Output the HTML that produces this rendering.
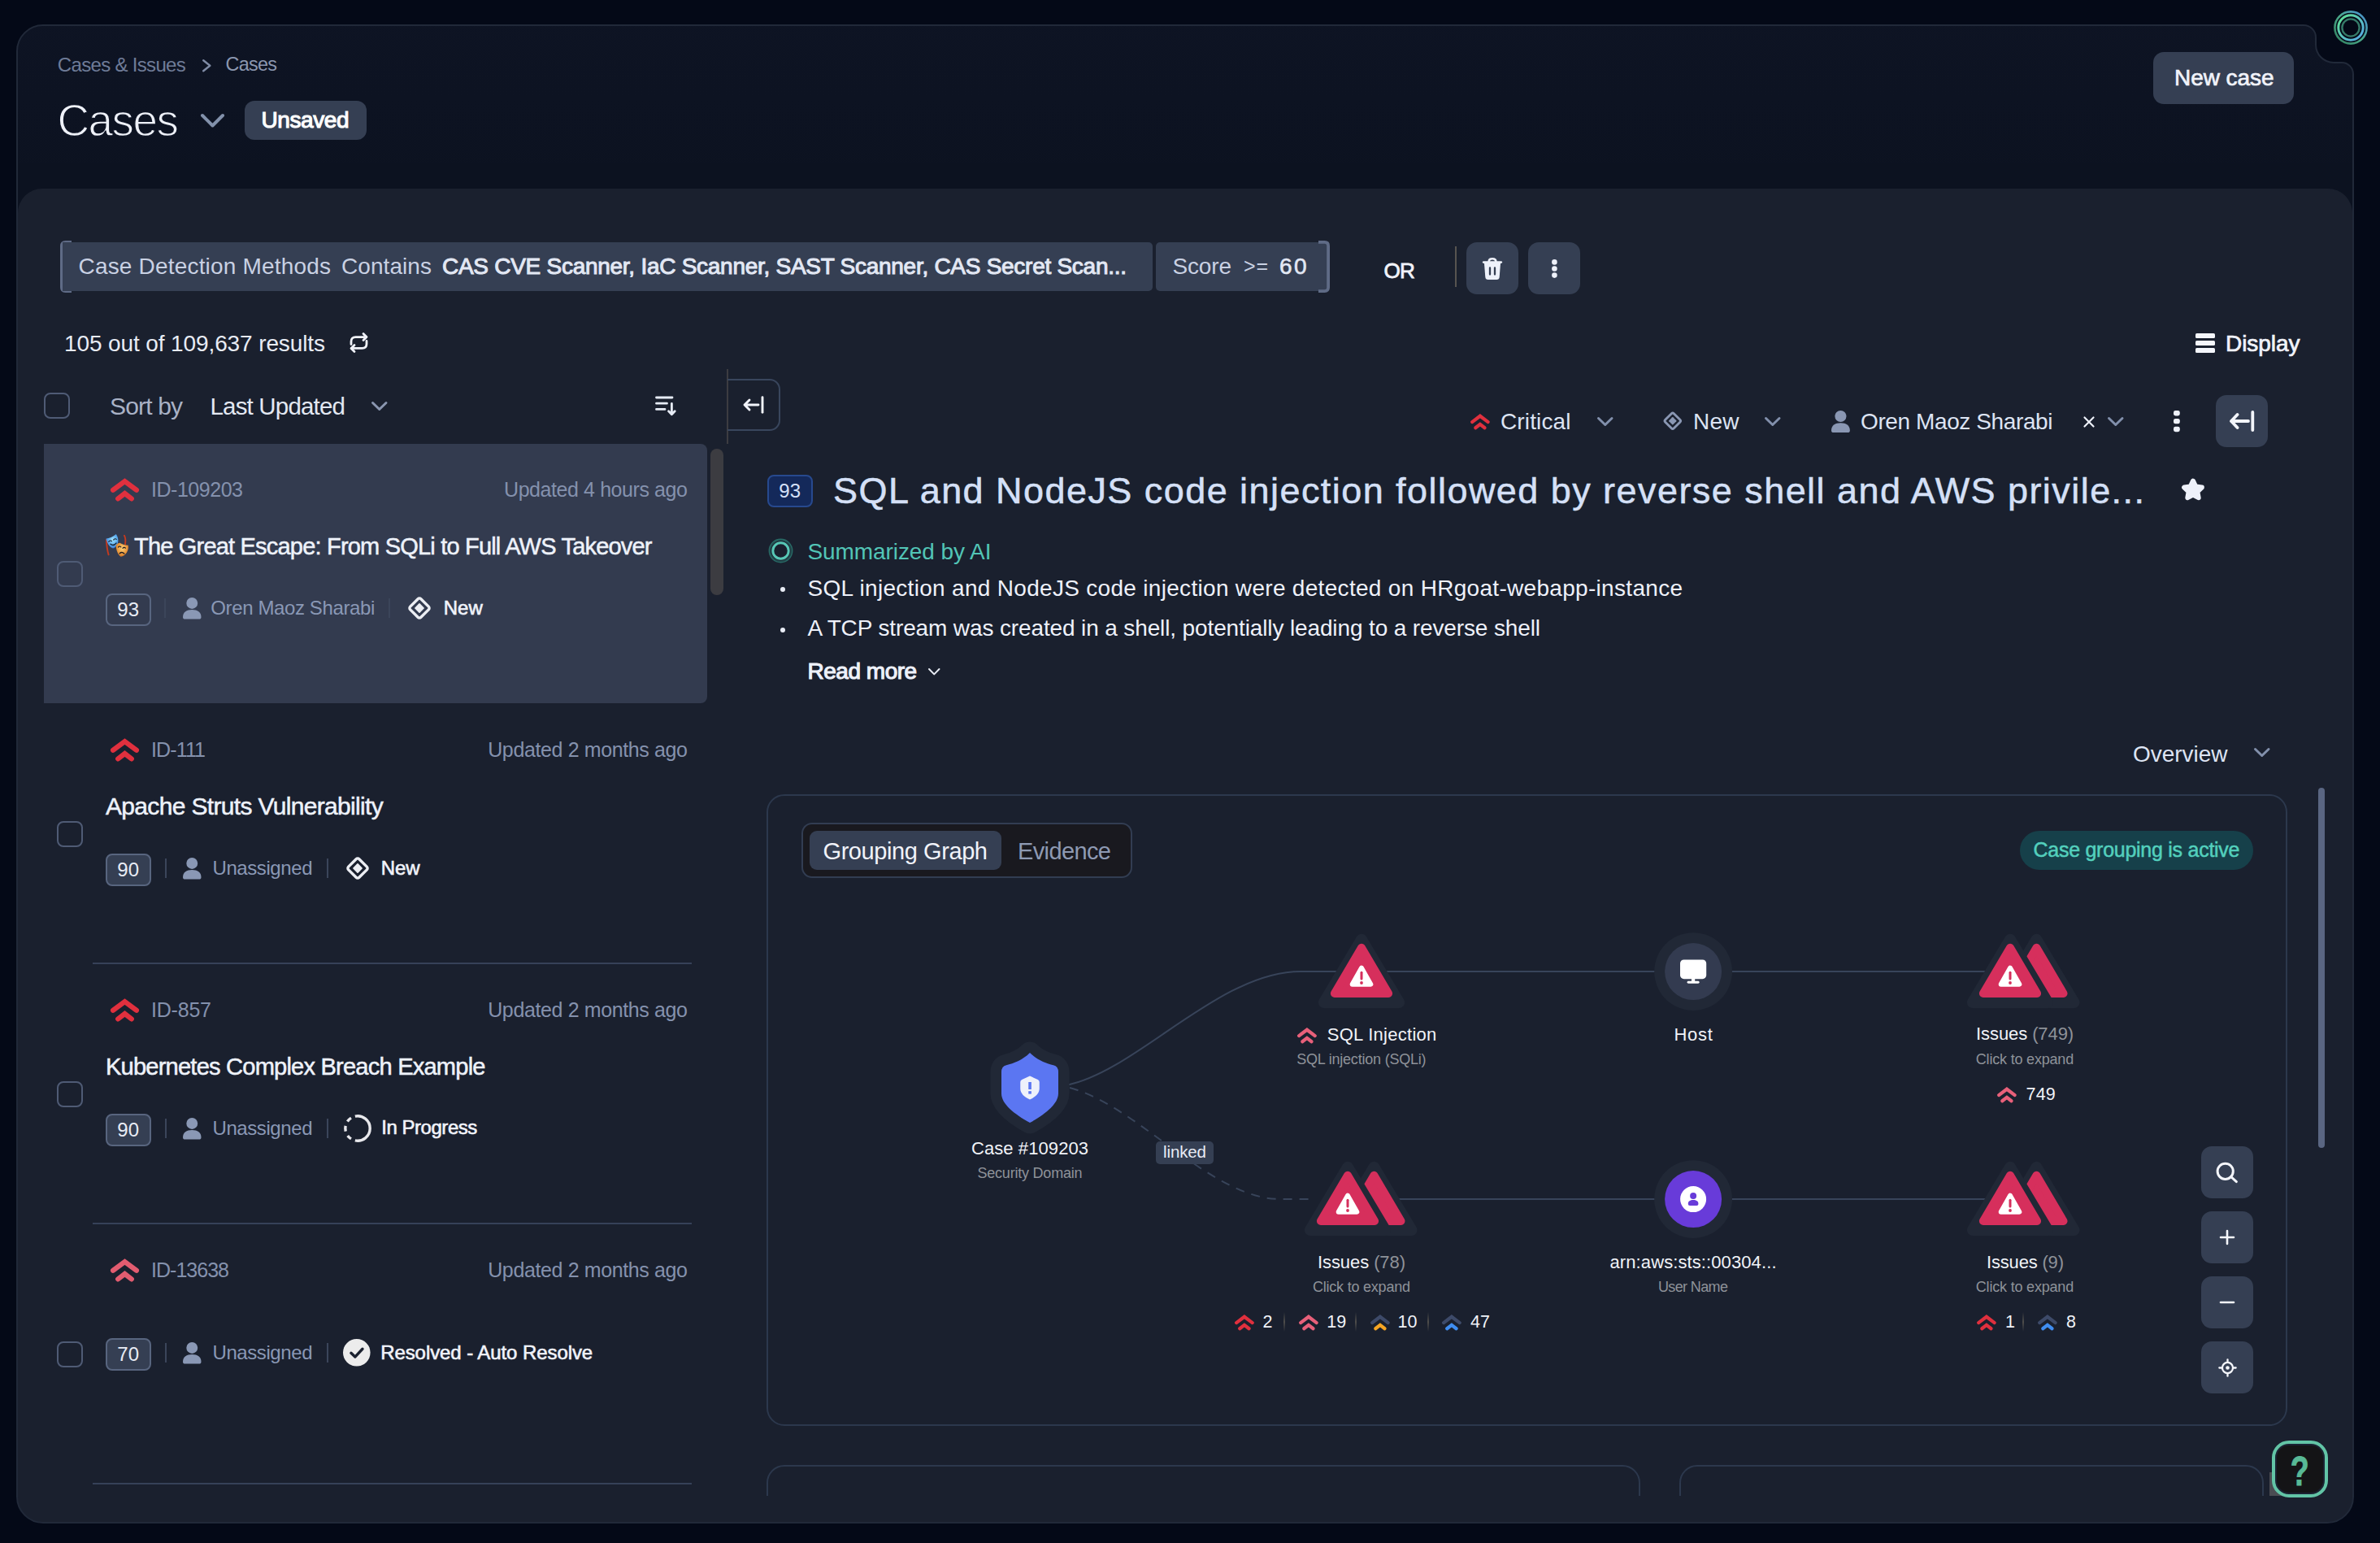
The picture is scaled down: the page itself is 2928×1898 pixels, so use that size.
<!DOCTYPE html>
<html lang="en"><head><meta charset="utf-8"><title>Cases</title>
<style>
html,body{margin:0;padding:0;}
body{width:2928px;height:1898px;overflow:hidden;position:relative;background:#040917;font-family:"Liberation Sans", sans-serif;}
.a{position:absolute;display:block;}
.t{white-space:pre;}
svg{overflow:visible;}
</style></head><body>
<svg class="a" style="left:0px;top:0px;" width="2928" height="1898" viewBox="0 0 2928 1898"><defs><clipPath id="fc"><path d="M21,63 A32,32 0 0 1 53,31 L2834,31 A15,15 0 0 1 2849,46 L2849,55 A22,22 0 0 0 2871,77 L2881,77 A14,14 0 0 1 2895,91 L2895,1841 A32,32 0 0 1 2863,1873 L53,1873 A32,32 0 0 1 21,1841 Z"/></clipPath><linearGradient id="hg" x1="0" y1="0" x2="0" y2="1"><stop offset="0" stop-color="#0e1424"/><stop offset="1" stop-color="#0c1220"/></linearGradient></defs><g clip-path="url(#fc)"><rect x="0" y="0" width="2928" height="240" fill="url(#hg)"/><rect x="0" y="200" width="2928" height="80" fill="#0c1220"/><path d="M22,1898 L22,262 A30,30 0 0 1 52,232 L2864,232 A30,30 0 0 1 2894,262 L2894,1898 Z" fill="#1a202e"/></g><path d="M21,63 A32,32 0 0 1 53,31 L2834,31 A15,15 0 0 1 2849,46 L2849,55 A22,22 0 0 0 2871,77 L2881,77 A14,14 0 0 1 2895,91 L2895,1841 A32,32 0 0 1 2863,1873 L53,1873 A32,32 0 0 1 21,1841 Z" fill="none" stroke="#212939" stroke-width="2"/></svg>
<span class="a t" style="top:67.68px;font-size:24.0px;line-height:24.0px;color:#6f7c98;letter-spacing:-0.672px;left:70.80px;">Cases &amp; Issues</span>
<svg class="a" style="left:248.5px;top:72.5px;" width="10.5" height="15.5" viewBox="0 0 10.5 15.5"><path d="M1.2,1.2 L9.3,7.75 L1.2,14.3" fill="none" stroke="#7f8ba5" stroke-width="2.4" stroke-linecap="round" stroke-linejoin="round"/></svg>
<span class="a t" style="top:68.19px;font-size:23.4px;line-height:23.4px;color:#8b97b0;letter-spacing:-0.703px;left:277.50px;">Cases</span>
<span class="a t" style="top:120.92px;font-size:54.91px;line-height:54.91px;color:#eef1f8;letter-spacing:-1.535px;left:70.50px;-webkit-text-stroke:1.3px #0d1323;">Cases</span>
<svg class="a" style="left:246.5px;top:139.5px;" width="29" height="16.5" viewBox="0 0 29 16.5"><path d="M2.0,2.0 L14.5,14.5 L27.0,2.0" fill="none" stroke="#8291ab" stroke-width="4" stroke-linecap="round" stroke-linejoin="round"/></svg>
<div class="a" style="left:300.5px;top:124px;width:150.5px;height:48px;background:#353f53;border-radius:12px;"></div>
<span class="a t" style="top:134.30px;font-size:28px;line-height:28px;color:#ffffff;letter-spacing:-0.419px;-webkit-text-stroke:1.1px #ffffff;left:321.50px;">Unsaved</span>
<div class="a" style="left:2649px;top:64px;width:173px;height:64px;background:#353f53;border-radius:13px;"></div>
<span class="a t" style="top:82.40px;font-size:28px;line-height:28px;color:#f1f3fa;letter-spacing:-0.048px;-webkit-text-stroke:0.7px #f1f3fa;left:2675.00px;">New case</span>
<svg class="a" style="left:2871.0px;top:12.700000000000003px;" width="42" height="42" viewBox="0 0 42 42"><defs><linearGradient id="lg1" x1="0" y1="1" x2="1" y2="0"><stop offset="0" stop-color="#2f7d5c"/><stop offset="0.5" stop-color="#4aa98a"/><stop offset="1" stop-color="#4a90d9"/></linearGradient><linearGradient id="lg2" x1="0" y1="0" x2="1" y2="1"><stop offset="0" stop-color="#5fe08f"/><stop offset="1" stop-color="#55a6e8"/></linearGradient></defs><circle cx="21" cy="21" r="19.6" fill="none" stroke="url(#lg1)" stroke-width="2.6"/><circle cx="21" cy="21" r="15.2" fill="none" stroke="url(#lg2)" stroke-width="3"/><circle cx="21" cy="21" r="10.6" fill="none" stroke="#357a68" stroke-width="2.4"/></svg>
<svg class="a" style="left:73.8px;top:295.5px;" width="14" height="64" viewBox="0 0 14 64"><path d="M14,1.9 L6.4,1.9 Q1.9,1.9 1.9,6.4 L1.9,57.6 Q1.9,62.1 6.4,62.1 L14,62.1" fill="none" stroke="#5f6b86" stroke-width="3.8"/></svg>
<div class="a" style="left:76.5px;top:298px;width:1341.5px;height:60px;background:#353f53;border-radius:0 5px 5px 0;"></div>
<span class="a t" style="top:313.80px;font-size:28px;line-height:28px;color:#c9d1e3;letter-spacing:0.185px;left:96.50px;">Case Detection Methods</span>
<span class="a t" style="top:313.80px;font-size:28px;line-height:28px;color:#c9d1e3;letter-spacing:0.069px;left:420.00px;">Contains</span>
<span class="a t" style="top:313.80px;font-size:28px;line-height:28px;color:#e3e8f4;letter-spacing:-0.272px;-webkit-text-stroke:1.0px #e3e8f4;left:544.00px;">CAS CVE Scanner, IaC Scanner, SAST Scanner, CAS Secret Scan...</span>
<div class="a" style="left:1422px;top:298px;width:211.5px;height:60px;background:#353f53;border-radius:5px 0 0 5px;"></div>
<span class="a t" style="top:313.80px;font-size:28px;line-height:28px;color:#c9d1e3;letter-spacing:-0.164px;left:1442.50px;">Score</span>
<span class="a t" style="top:315.34px;font-size:25px;line-height:25px;color:#c9d1e3;letter-spacing:0.797px;left:1530.00px;">&gt;=</span>
<span class="a t" style="top:313.80px;font-size:28px;line-height:28px;color:#e3e8f4;letter-spacing:2.344px;-webkit-text-stroke:0.6px #e3e8f4;left:1574.00px;">60</span>
<svg class="a" style="left:1622.2px;top:295.5px;" width="14" height="64" viewBox="0 0 14 64"><path d="M0,1.9 L7.6,1.9 Q12.1,1.9 12.1,6.4 L12.1,57.6 Q12.1,62.1 7.6,62.1 L0,62.1" fill="none" stroke="#5f6b86" stroke-width="3.8"/></svg>
<span class="a t" style="top:320.36px;font-size:26.15px;line-height:26.15px;color:#f1f3fa;letter-spacing:-0.719px;-webkit-text-stroke:0.8px #f1f3fa;left:1702.50px;">OR</span>
<div class="a" style="left:1790px;top:303px;width:2px;height:50px;background:#575450;"></div>
<div class="a" style="left:1804px;top:298px;width:64px;height:64px;background:#353f53;border-radius:13px;"></div>
<svg class="a" style="left:1822px;top:315.7px;" width="28" height="29" viewBox="0 0 28 29"><path d="M3.3,6.6 L24.7,6.6" stroke="#eef1fa" stroke-width="2.9" stroke-linecap="round"/><path d="M9.6,6 C9.6,3 11,2.2 14,2.2 C17,2.2 18.4,3 18.4,6" fill="none" stroke="#eef1fa" stroke-width="2.6"/><path d="M3.9,7 L24.1,7 L22.7,24.8 C22.5,27 21.3,28 19.3,28 L8.7,28 C6.7,28 5.5,27 5.3,24.8 Z" fill="#eef1fa"/><path d="M11,13.4 L11,21.6 M17,13.4 L17,21.6" stroke="#353f53" stroke-width="2.3" stroke-linecap="round"/></svg>
<div class="a" style="left:1880px;top:298px;width:64px;height:64px;background:#353f53;border-radius:13px;"></div>
<svg class="a" style="left:1908.6px;top:318.5px;" width="6.8" height="23" viewBox="0 0 6.8 23"><circle cx="3.4" cy="3.4" r="3.3" fill="#eef1fa"/><circle cx="3.4" cy="11.5" r="3.3" fill="#eef1fa"/><circle cx="3.4" cy="19.599999999999998" r="3.3" fill="#eef1fa"/></svg>
<span class="a t" style="top:408.80px;font-size:28px;line-height:28px;color:#e8ecf5;letter-spacing:-0.112px;left:79.00px;">105 out of 109,637 results</span>
<svg class="a" style="left:429.5px;top:409.3px;" width="23" height="25" viewBox="0 0 23 25"><g fill="none" stroke="#f1f3fa" stroke-width="2.8" stroke-linecap="round" stroke-linejoin="round"><path d="M2,14.5 L2,11 C2,7.5 4,5.6 7.5,5.6 L20.5,5.6"/><path d="M17,1.6 L21,5.6 L17,9.6"/><path d="M21,10.5 L21,14 C21,17.5 19,19.4 15.5,19.4 L2.5,19.4"/><path d="M6,15.4 L2,19.4 L6,23.4"/></g></svg>
<svg class="a" style="left:2701px;top:410px;" width="24" height="24" viewBox="0 0 24 24"><rect x="0" y="0" width="24" height="6" rx="1.6" fill="#f4f6fb"/><rect x="0" y="9" width="24" height="6" rx="1.6" fill="#f4f6fb"/><rect x="0" y="18" width="24" height="6" rx="1.6" fill="#f4f6fb"/></svg>
<span class="a t" style="top:408.80px;font-size:28px;line-height:28px;color:#f1f3fa;letter-spacing:-0.052px;-webkit-text-stroke:0.7px #f1f3fa;left:2738.00px;">Display</span>
<div class="a" style="left:54px;top:483px;width:32px;height:32px;border-radius:8px;border:2px solid #4f5b75;box-sizing:border-box;"></div>
<span class="a t" style="top:484.61px;font-size:30px;line-height:30px;color:#a9b2c6;letter-spacing:-0.841px;left:135.00px;">Sort by</span>
<span class="a t" style="top:485.01px;font-size:29.52px;line-height:29.52px;color:#e3e8f2;letter-spacing:-0.827px;left:258.50px;">Last Updated</span>
<svg class="a" style="left:456.5px;top:494px;" width="19.5" height="11" viewBox="0 0 19.5 11"><path d="M1.5,1.5 L9.75,9.5 L18.0,1.5" fill="none" stroke="#8a96b0" stroke-width="3" stroke-linecap="round" stroke-linejoin="round"/></svg>
<svg class="a" style="left:805.5px;top:486px;" width="26" height="26" viewBox="0 0 26 26"><g fill="none" stroke="#e6ebf5" stroke-width="2.8" stroke-linecap="round" stroke-linejoin="round"><path d="M1.5,3 L21,3 M1.5,10.2 L14.5,10.2 M1.5,17.4 L12,17.4"/><path d="M20.4,10.5 L20.4,23.5 M16.6,19.8 L20.4,23.8 L24.2,19.8"/></g></svg>
<div class="a" style="left:894px;top:454px;width:2px;height:92px;background:#3c3c41;"></div>
<div class="a" style="left:895px;top:466px;width:65px;height:64px;border-radius:0 13px 13px 0;border:2px solid #39465d;box-sizing:border-box;border-left:none;"></div>
<svg class="a" style="left:913.6px;top:486.9px;" width="26" height="22" viewBox="0 0 26 22"><g fill="none" stroke="#f1f3fa" stroke-width="2.9" stroke-linecap="round" stroke-linejoin="round"><path d="M2,11 L19,11 M8,5 L2,11 L8,17"/><path d="M24,1.8 L24,20.2"/></g></svg>
<div class="a" style="left:54px;top:546px;width:816px;height:319px;background:#333b4f;border-radius:0 8px 8px 0;"></div>
<svg class="a" style="left:136.4px;top:587.9px;" width="35" height="28.5" viewBox="0 0 35 28.5"><g fill="none" stroke-width="6.2" stroke-linecap="round" stroke-linejoin="miter"><path d="M3.1,14.8 L17.5,4.0 L31.9,14.8" stroke="#e0303e"/><path d="M9.2,25.4 L17.5,19.0 L25.8,25.4" stroke="#e0303e"/></g></svg>
<span class="a t" style="top:589.84px;font-size:25px;line-height:25px;color:#8491ad;letter-spacing:-0.469px;left:186.00px;">ID-109203</span>
<span class="a t" style="top:589.84px;font-size:25px;line-height:25px;color:#8491ad;letter-spacing:-0.418px;left:620.00px;">Updated 4 hours ago</span>
<svg class="a" style="left:130px;top:656px;" width="29" height="30" viewBox="0 0 29 30"><defs><radialGradient id="mb" cx="0.55" cy="0.4" r="0.7"><stop offset="0" stop-color="#a6e4fb"/><stop offset="0.55" stop-color="#56a9ee"/><stop offset="1" stop-color="#3767c8"/></radialGradient><radialGradient id="mo" cx="0.5" cy="0.4" r="0.7"><stop offset="0" stop-color="#fbd27a"/><stop offset="0.6" stop-color="#e8953a"/><stop offset="1" stop-color="#b95e1c"/></radialGradient></defs><path d="M0.9,8 C1.2,14 1.6,20 3.6,26.4" fill="none" stroke="#c53a1e" stroke-width="1.9" stroke-linecap="round"/><path d="M22.9,2.8 C24.4,5.2 24.7,9 24,13.4" fill="none" stroke="#c53a1e" stroke-width="1.9" stroke-linecap="round"/><path d="M0.5,6.5 C4,6 9,4.5 12.8,0.9 C15,4 16.3,8.5 14.8,12.5 C13.6,15.8 11.5,18 9.2,18.6 C5.5,17.6 1.5,12.5 0.5,6.5 Z" fill="url(#mb)"/><path d="M3.8,10.4 Q5.5,8 7.4,9.7 M9.8,8 Q11.6,5.8 13.2,7.4" fill="none" stroke="#16202e" stroke-width="1.2" stroke-linecap="round"/><path d="M6,13.3 Q9.6,16.2 13,12.1" fill="none" stroke="#16202e" stroke-width="1.4" stroke-linecap="round"/><path d="M12.6,14.5 C14.5,12.4 16.3,11.8 17.5,11.8 C20.5,13.8 24,14.5 27.8,14.8 C28.3,19 27,23.5 24,26 C22,27.8 19.8,28.8 18.6,28.7 C15,26.5 12.6,20 12.6,14.5 Z" fill="url(#mo)"/><path d="M15.5,17.1 Q17,15 18.8,16.9 M21,18.3 Q22.8,16.4 24.4,18.1" fill="none" stroke="#1c1a22" stroke-width="1.2" stroke-linecap="round"/><path d="M17.2,24.7 Q20,22.3 22.8,25.1" fill="none" stroke="#1c1a22" stroke-width="1.4" stroke-linecap="round"/></svg>
<span class="a t" style="top:657.93px;font-size:29.02px;line-height:29.02px;color:#eef2fa;letter-spacing:-0.812px;-webkit-text-stroke:0.5px #eef2fa;left:165.00px;">The Great Escape: From SQLi to Full AWS Takeover</span>
<div class="a" style="left:70px;top:690px;width:32px;height:32px;border-radius:8px;border:2px solid #4f5b75;box-sizing:border-box;"></div>
<div class="a" style="left:130px;top:730px;width:55.5px;height:40px;border-radius:8px;border:2px solid #58657f;box-sizing:border-box;"></div>
<span class="a t" style="top:737.88px;font-size:24px;line-height:24px;color:#e8ecf5;left:144.35px;">93</span>
<div class="a" style="left:201.5px;top:736px;width:2px;height:24px;background:#3b455a;"></div>
<svg class="a" style="left:224.5px;top:734.5px;" width="22.51" height="26.6" viewBox="0 0 22 26"><circle cx="11" cy="6.8" r="6.8" fill="#8a98b5"/><path d="M0,23.5 C0,17.5 4.5,14.6 11,14.6 C17.5,14.6 22,17.5 22,23.5 C22,25.2 21,26 19.5,26 L2.5,26 C1,26 0,25.2 0,23.5 Z" fill="#8a98b5"/></svg>
<span class="a t" style="top:735.98px;font-size:24px;line-height:24px;color:#8a98b5;letter-spacing:-0.382px;left:259.30px;">Oren Maoz Sharabi</span>
<div class="a" style="left:478px;top:736px;width:2px;height:24px;background:#3b455a;"></div>
<svg class="a" style="left:500.0px;top:732.1px;" width="32" height="32" viewBox="0 0 32 32"><g transform="translate(16 16) rotate(45)"><rect x="-9.3" y="-9.3" width="18.6" height="18.6" rx="2.6" fill="none" stroke="#eceef3" stroke-width="3.4"/><rect x="-4.4" y="-4.4" width="8.8" height="8.8" rx="0.8" fill="#eceef3"/></g></svg>
<span class="a t" style="top:735.98px;font-size:24px;line-height:24px;color:#f1f3fa;letter-spacing:-0.008px;-webkit-text-stroke:0.6px #f1f3fa;left:545.80px;">New</span>
<svg class="a" style="left:136.4px;top:907.9px;" width="35" height="28.5" viewBox="0 0 35 28.5"><g fill="none" stroke-width="6.2" stroke-linecap="round" stroke-linejoin="miter"><path d="M3.1,14.8 L17.5,4.0 L31.9,14.8" stroke="#e0303e"/><path d="M9.2,25.4 L17.5,19.0 L25.8,25.4" stroke="#e0303e"/></g></svg>
<span class="a t" style="top:909.84px;font-size:25px;line-height:25px;color:#8491ad;letter-spacing:-0.866px;left:186.00px;">ID-111</span>
<span class="a t" style="top:909.84px;font-size:25px;line-height:25px;color:#8491ad;letter-spacing:-0.377px;left:600.20px;">Updated 2 months ago</span>
<span class="a t" style="top:977.11px;font-size:30px;line-height:30px;color:#eef2fa;letter-spacing:-0.668px;-webkit-text-stroke:0.5px #eef2fa;left:130.00px;">Apache Struts Vulnerability</span>
<div class="a" style="left:70px;top:1010px;width:32px;height:32px;border-radius:8px;border:2px solid #4f5b75;box-sizing:border-box;"></div>
<div class="a" style="left:130px;top:1050px;width:55.5px;height:40px;background:#353f53;border-radius:8px;border:2px solid #58657f;box-sizing:border-box;"></div>
<span class="a t" style="top:1057.88px;font-size:24px;line-height:24px;color:#e8ecf5;left:144.35px;">90</span>
<div class="a" style="left:202.5px;top:1056px;width:2px;height:24px;background:#3b455a;"></div>
<svg class="a" style="left:224.5px;top:1054.5px;" width="22.51" height="26.6" viewBox="0 0 22 26"><circle cx="11" cy="6.8" r="6.8" fill="#8a98b5"/><path d="M0,23.5 C0,17.5 4.5,14.6 11,14.6 C17.5,14.6 22,17.5 22,23.5 C22,25.2 21,26 19.5,26 L2.5,26 C1,26 0,25.2 0,23.5 Z" fill="#8a98b5"/></svg>
<span class="a t" style="top:1055.98px;font-size:24px;line-height:24px;color:#8a98b5;letter-spacing:-0.417px;left:261.50px;">Unassigned</span>
<div class="a" style="left:401.8px;top:1056px;width:2px;height:24px;background:#3b455a;"></div>
<svg class="a" style="left:423.6px;top:1052.1px;" width="32" height="32" viewBox="0 0 32 32"><g transform="translate(16 16) rotate(45)"><rect x="-9.3" y="-9.3" width="18.6" height="18.6" rx="2.6" fill="none" stroke="#eceef3" stroke-width="3.4"/><rect x="-4.4" y="-4.4" width="8.8" height="8.8" rx="0.8" fill="#eceef3"/></g></svg>
<span class="a t" style="top:1055.98px;font-size:24px;line-height:24px;color:#f1f3fa;letter-spacing:-0.008px;-webkit-text-stroke:0.6px #f1f3fa;left:468.70px;">New</span>
<svg class="a" style="left:136.4px;top:1227.9px;" width="35" height="28.5" viewBox="0 0 35 28.5"><g fill="none" stroke-width="6.2" stroke-linecap="round" stroke-linejoin="miter"><path d="M3.1,14.8 L17.5,4.0 L31.9,14.8" stroke="#e0303e"/><path d="M9.2,25.4 L17.5,19.0 L25.8,25.4" stroke="#e0303e"/></g></svg>
<span class="a t" style="top:1229.84px;font-size:25px;line-height:25px;color:#8491ad;letter-spacing:-0.209px;left:186.00px;">ID-857</span>
<span class="a t" style="top:1229.84px;font-size:25px;line-height:25px;color:#8491ad;letter-spacing:-0.377px;left:600.20px;">Updated 2 months ago</span>
<span class="a t" style="top:1297.86px;font-size:29.11px;line-height:29.11px;color:#eef2fa;letter-spacing:-0.812px;-webkit-text-stroke:0.5px #eef2fa;left:130.00px;">Kubernetes Complex Breach Example</span>
<div class="a" style="left:70px;top:1330px;width:32px;height:32px;border-radius:8px;border:2px solid #4f5b75;box-sizing:border-box;"></div>
<div class="a" style="left:130px;top:1370px;width:55.5px;height:40px;background:#353f53;border-radius:8px;border:2px solid #58657f;box-sizing:border-box;"></div>
<span class="a t" style="top:1377.88px;font-size:24px;line-height:24px;color:#e8ecf5;left:144.35px;">90</span>
<div class="a" style="left:202.5px;top:1376px;width:2px;height:24px;background:#3b455a;"></div>
<svg class="a" style="left:224.5px;top:1374.5px;" width="22.51" height="26.6" viewBox="0 0 22 26"><circle cx="11" cy="6.8" r="6.8" fill="#8a98b5"/><path d="M0,23.5 C0,17.5 4.5,14.6 11,14.6 C17.5,14.6 22,17.5 22,23.5 C22,25.2 21,26 19.5,26 L2.5,26 C1,26 0,25.2 0,23.5 Z" fill="#8a98b5"/></svg>
<span class="a t" style="top:1375.98px;font-size:24px;line-height:24px;color:#8a98b5;letter-spacing:-0.417px;left:261.50px;">Unassigned</span>
<div class="a" style="left:401.8px;top:1376px;width:2px;height:24px;background:#3b455a;"></div>
<svg class="a" style="left:422.9px;top:1370.8px;" width="34" height="34" viewBox="0 0 34 34"><path d="M13.84,2.13 A15.2,15.2 0 1 1 13.84,31.87 M8.95,29.89 A15.2,15.2 0 0 1 4.70,25.93 M2.25,20.68 A15.2,15.2 0 0 1 2.13,13.84 M4.40,8.50 A15.2,15.2 0 0 1 8.95,4.11" fill="none" stroke="#e8e8ec" stroke-width="3.4" stroke-linecap="butt"/></svg>
<span class="a t" style="top:1375.48px;font-size:24px;line-height:24px;color:#f1f3fa;letter-spacing:-0.472px;-webkit-text-stroke:0.6px #f1f3fa;left:469.30px;">In Progress</span>
<svg class="a" style="left:136.4px;top:1547.9px;" width="35" height="28.5" viewBox="0 0 35 28.5"><g fill="none" stroke-width="6.2" stroke-linecap="round" stroke-linejoin="miter"><path d="M3.1,14.8 L17.5,4.0 L31.9,14.8" stroke="#e25c70"/><path d="M9.2,25.4 L17.5,19.0 L25.8,25.4" stroke="#e25c70"/></g></svg>
<span class="a t" style="top:1549.84px;font-size:25px;line-height:25px;color:#8491ad;letter-spacing:-0.980px;left:186.00px;">ID-13638</span>
<span class="a t" style="top:1549.84px;font-size:25px;line-height:25px;color:#8491ad;letter-spacing:-0.377px;left:600.20px;">Updated 2 months ago</span>
<div class="a" style="left:70px;top:1650px;width:32px;height:32px;border-radius:8px;border:2px solid #4f5b75;box-sizing:border-box;"></div>
<div class="a" style="left:130px;top:1646px;width:55.5px;height:40px;background:#353f53;border-radius:8px;border:2px solid #58657f;box-sizing:border-box;"></div>
<span class="a t" style="top:1653.88px;font-size:24px;line-height:24px;color:#e8ecf5;left:144.35px;">70</span>
<div class="a" style="left:202.5px;top:1652px;width:2px;height:24px;background:#3b455a;"></div>
<svg class="a" style="left:224.5px;top:1650.5px;" width="22.51" height="26.6" viewBox="0 0 22 26"><circle cx="11" cy="6.8" r="6.8" fill="#8a98b5"/><path d="M0,23.5 C0,17.5 4.5,14.6 11,14.6 C17.5,14.6 22,17.5 22,23.5 C22,25.2 21,26 19.5,26 L2.5,26 C1,26 0,25.2 0,23.5 Z" fill="#8a98b5"/></svg>
<span class="a t" style="top:1651.98px;font-size:24px;line-height:24px;color:#8a98b5;letter-spacing:-0.417px;left:261.50px;">Unassigned</span>
<div class="a" style="left:401.8px;top:1652px;width:2px;height:24px;background:#3b455a;"></div>
<svg class="a" style="left:422.2px;top:1647.0px;" width="33.6" height="33.6" viewBox="0 0 34 34"><circle cx="17" cy="17" r="17" fill="#ececec"/><path d="M10,17.5 L15,22.3 L24.3,12.4" fill="none" stroke="#1c2230" stroke-width="3.4" stroke-linecap="round" stroke-linejoin="round"/></svg>
<span class="a t" style="top:1651.98px;font-size:24px;line-height:24px;color:#f1f3fa;letter-spacing:-0.082px;-webkit-text-stroke:0.6px #f1f3fa;left:468.20px;">Resolved - Auto Resolve</span>
<div class="a" style="left:114px;top:1184px;width:737px;height:2px;background:#364158;"></div>
<div class="a" style="left:114px;top:1504px;width:737px;height:2px;background:#364158;"></div>
<div class="a" style="left:114px;top:1824px;width:737px;height:2px;background:#364158;"></div>
<div class="a" style="left:874px;top:552px;width:16px;height:180px;background:#3c3c41;border-radius:8px;"></div>
<svg class="a" style="left:1809.3px;top:508.6px;" width="23.8" height="19.38" viewBox="0 0 35 28.5"><g fill="none" stroke-width="6.2" stroke-linecap="round" stroke-linejoin="miter"><path d="M3.1,14.8 L17.5,4.0 L31.9,14.8" stroke="#e0303e"/><path d="M9.2,25.4 L17.5,19.0 L25.8,25.4" stroke="#e0303e"/></g></svg>
<span class="a t" style="top:504.70px;font-size:28px;line-height:28px;color:#dde4f3;letter-spacing:0.134px;left:1846.00px;">Critical</span>
<svg class="a" style="left:1964.5px;top:512.8px;" width="19.5" height="11" viewBox="0 0 19.5 11"><path d="M1.5,1.5 L9.75,9.5 L18.0,1.5" fill="none" stroke="#8290ac" stroke-width="3" stroke-linecap="round" stroke-linejoin="round"/></svg>
<svg class="a" style="left:2045.2px;top:505.2px;" width="25.6" height="25.6" viewBox="0 0 32 32"><g transform="translate(16 16) rotate(45)"><rect x="-9.3" y="-9.3" width="18.6" height="18.6" rx="2.6" fill="none" stroke="#8a97b3" stroke-width="3.6"/><rect x="-4.4" y="-4.4" width="8.8" height="8.8" rx="0.8" fill="#8a97b3"/></g></svg>
<span class="a t" style="top:504.70px;font-size:28px;line-height:28px;color:#dde4f3;letter-spacing:0.242px;left:2083.00px;">New</span>
<svg class="a" style="left:2170.5px;top:512.8px;" width="19.5" height="11" viewBox="0 0 19.5 11"><path d="M1.5,1.5 L9.75,9.5 L18.0,1.5" fill="none" stroke="#8290ac" stroke-width="3" stroke-linecap="round" stroke-linejoin="round"/></svg>
<svg class="a" style="left:2252.8px;top:504.6px;" width="22.85" height="27" viewBox="0 0 22 26"><circle cx="11" cy="6.8" r="6.8" fill="#8a97b3"/><path d="M0,23.5 C0,17.5 4.5,14.6 11,14.6 C17.5,14.6 22,17.5 22,23.5 C22,25.2 21,26 19.5,26 L2.5,26 C1,26 0,25.2 0,23.5 Z" fill="#8a97b3"/></svg>
<span class="a t" style="top:504.70px;font-size:28px;line-height:28px;color:#dde4f3;letter-spacing:-0.394px;left:2289.00px;">Oren Maoz Sharabi</span>
<svg class="a" style="left:2563px;top:511.5px;" width="14" height="14" viewBox="0 0 14 14"><path d="M1.5,1.5 L12.5,12.5 M12.5,1.5 L1.5,12.5" stroke="#eef1fa" stroke-width="2.2" stroke-linecap="round"/></svg>
<svg class="a" style="left:2592.5px;top:512.8px;" width="19.5" height="11" viewBox="0 0 19.5 11"><path d="M1.5,1.5 L9.75,9.5 L18.0,1.5" fill="none" stroke="#8290ac" stroke-width="3" stroke-linecap="round" stroke-linejoin="round"/></svg>
<svg class="a" style="left:2674px;top:505px;" width="7.8" height="26.4" viewBox="0 0 7.8 26.4"><rect x="0" y="0.0" width="7.8" height="6.4" rx="2.4" fill="#eef1fa"/><rect x="0" y="9.9" width="7.8" height="6.4" rx="2.4" fill="#eef1fa"/><rect x="0" y="19.8" width="7.8" height="6.4" rx="2.4" fill="#eef1fa"/></svg>
<div class="a" style="left:2726px;top:486px;width:64px;height:64px;background:#353f53;border-radius:13px;"></div>
<svg class="a" style="left:2741px;top:503px;" width="34" height="30" viewBox="0 0 34 30"><g fill="none" stroke="#f4f6fb" stroke-width="3.8" stroke-linecap="round" stroke-linejoin="round"><path d="M4,15 L25,15 M11.5,7 L4,15 L11.5,23"/><path d="M30.3,3.9 L30.3,26.1"/></g></svg>
<div class="a" style="left:944px;top:584px;width:55.5px;height:40px;background:#14295a;border-radius:8px;border:2px solid #27498e;box-sizing:border-box;"></div>
<span class="a t" style="top:592.08px;font-size:24px;line-height:24px;color:#d5e0f7;left:958.35px;">93</span>
<span class="a t" style="top:580.91px;font-size:45px;line-height:45px;color:#d5e0f7;letter-spacing:1.446px;-webkit-text-stroke:0.5px #d5e0f7;left:1025.00px;">SQL and NodeJS code injection followed by reverse shell and AWS privile...</span>
<svg class="a" style="left:2682.0px;top:586.2px;" width="32" height="32" viewBox="0 0 32 32"><polygon points="16.00,5.60 19.29,12.47 26.84,13.48 21.33,18.73 22.70,26.22 16.00,22.60 9.30,26.22 10.67,18.73 5.16,13.48 12.71,12.47" fill="#eef1fa" stroke="#eef1fa" stroke-width="6" stroke-linejoin="round"/></svg>
<svg class="a" style="left:944.6px;top:662.4px;" width="31" height="31" viewBox="0 0 32 32"><circle cx="16" cy="16" r="14.6" fill="none" stroke="#2c7d74" stroke-width="1.6" opacity="0.8"/><circle cx="16" cy="16" r="13" fill="none" stroke="#2a6a66" stroke-width="1.4" opacity="0.55"/><circle cx="16" cy="16" r="10" fill="none" stroke="#57c7b6" stroke-width="3"/></svg>
<span class="a t" style="top:664.80px;font-size:28px;line-height:28px;color:#52c5b6;letter-spacing:-0.080px;left:993.50px;">Summarized by AI</span>
<div class="a" style="left:959.6px;top:721.9px;width:6.4px;height:6.4px;background:#e8ecf5;border-radius:4px;"></div>
<span class="a t" style="top:709.70px;font-size:28px;line-height:28px;color:#eef1fa;letter-spacing:0.305px;left:993.50px;">SQL injection and NodeJS code injection were detected on HRgoat-webapp-instance</span>
<div class="a" style="left:959.6px;top:771.6px;width:6.4px;height:6.4px;background:#e8ecf5;border-radius:4px;"></div>
<span class="a t" style="top:759.30px;font-size:28px;line-height:28px;color:#eef1fa;letter-spacing:-0.128px;left:993.50px;">A TCP stream was created in a shell, potentially leading to a reverse shell</span>
<span class="a t" style="top:812.40px;font-size:28px;line-height:28px;color:#eef1fa;letter-spacing:-0.477px;-webkit-text-stroke:1.1px #eef1fa;left:993.50px;">Read more</span>
<svg class="a" style="left:1142px;top:822px;" width="14.5" height="8.4" viewBox="0 0 14.5 8.4"><path d="M1.0,1.0 L7.25,7.4 L13.5,1.0" fill="none" stroke="#e8ecf5" stroke-width="2" stroke-linecap="round" stroke-linejoin="round"/></svg>
<span class="a t" style="top:913.80px;font-size:28px;line-height:28px;color:#dde4f3;letter-spacing:-0.029px;left:2624.00px;">Overview</span>
<svg class="a" style="left:2772.5px;top:920.3px;" width="19.5" height="11" viewBox="0 0 19.5 11"><path d="M1.5,1.5 L9.75,9.5 L18.0,1.5" fill="none" stroke="#8290ac" stroke-width="3" stroke-linecap="round" stroke-linejoin="round"/></svg>
<div class="a" style="left:943px;top:977px;width:1871px;height:777px;border-radius:22px;border:2px solid #2c384d;box-sizing:border-box;"></div>
<div class="a" style="left:986px;top:1012px;width:407px;height:68px;background:#19191f;border-radius:13px;border:2px solid #323d52;box-sizing:border-box;"></div>
<div class="a" style="left:996px;top:1022px;width:236px;height:48px;background:#353f53;border-radius:9px;"></div>
<span class="a t" style="top:1032.75px;font-size:29px;line-height:29px;color:#f1f3fa;letter-spacing:-0.421px;left:1012.50px;">Grouping Graph</span>
<span class="a t" style="top:1032.75px;font-size:29px;line-height:29px;color:#8e9ab3;letter-spacing:-0.616px;left:1252.00px;">Evidence</span>
<div class="a" style="left:2485px;top:1022px;width:287px;height:48px;background:#16404a;border-radius:24px;"></div>
<span class="a t" style="top:1033.44px;font-size:25px;line-height:25px;color:#53d0bd;letter-spacing:-0.267px;-webkit-text-stroke:0.5px #53d0bd;left:2501.50px;">Case grouping is active</span>
<svg class="a" style="left:0px;top:0px;" width="2928" height="1898" viewBox="0 0 2928 1898"><g fill="none" stroke="#38445a" stroke-width="2"><path d="M1314,1334.5 C1400,1316 1500,1195 1600,1195 L2470,1195"/><path d="M1700,1475 L2470,1475"/><path d="M1316,1338 C1400,1360 1490,1475 1575,1475 L1612,1475" stroke-dasharray="11 9"/></g></svg>
<div class="a" style="left:1422px;top:1404px;width:70.5px;height:28px;background:#353f53;border-radius:5px;"></div>
<span class="a t" style="top:1406.95px;font-size:20.5px;line-height:20.5px;color:#e8ecf5;letter-spacing:-0.113px;left:1431.00px;">linked</span>
<svg class="a" style="left:1217px;top:1278px;" width="100" height="120" viewBox="0 0 100 120"><g transform="translate(15 17)"><path d="M35,0 C44,9 55,13 64,15.2 Q70,16.8 70,23.5 L70,50 C70,63 54,75.5 35,86 C16,75.5 0,63 0,50 L0,23.5 Q0,16.8 6,15.2 C15,13 26,9 35,0 Z" fill="#212836" stroke="#212836" stroke-width="27" stroke-linejoin="round"/><path d="M35,0 C44,9 55,13 64,15.2 Q70,16.8 70,23.5 L70,50 C70,63 54,75.5 35,86 C16,75.5 0,63 0,50 L0,23.5 Q0,16.8 6,15.2 C15,13 26,9 35,0 Z" fill="#5b76f2"/><g transform="translate(23.25 28.6)"><path d="M11.75,0 L21.5,4.4 Q23.5,5.3 23.5,7.4 L23.5,15.5 C23.5,21.5 18.5,26 11.75,29 C5,26 0,21.5 0,15.5 L0,7.4 Q0,5.3 2,4.4 Z" fill="#eef1fb"/><rect x="10" y="7.4" width="3.6" height="9" fill="#5b76f2"/><rect x="10" y="18.6" width="3.6" height="3.4" fill="#5b76f2"/></g></g></svg>
<span class="a t" style="top:1402.38px;font-size:22px;line-height:22px;color:#f1f3f8;letter-spacing:0.080px;left:1195.00px;">Case #109203</span>
<span class="a t" style="top:1433.76px;font-size:18px;line-height:18px;color:#8e9299;letter-spacing:-0.218px;left:1202.50px;">Security Domain</span>
<svg class="a" style="left:1575px;top:1148px;" width="200" height="100" viewBox="0 0 200 100"><polygon points="100.00,7.80 146.10,85.00 53.90,85.00" fill="#212836" stroke="#212836" stroke-width="14" stroke-linejoin="round"/><polygon points="100.00,17.80 133.10,74.00 66.90,74.00" fill="#d62f5c" stroke="#d62f5c" stroke-width="10" stroke-linejoin="round"/><polygon points="100.00,42.70 111.30,62.70 88.70,62.70" fill="#ffffff" stroke="#ffffff" stroke-width="6" stroke-linejoin="round"/><path d="M100,48.300000000000004 L100,56.1" stroke="#d62f5c" stroke-width="3" stroke-linecap="round"/><circle cx="100" cy="61.0" r="1.9" fill="#d62f5c"/></svg>
<svg class="a" style="left:1595.8px;top:1264.2px;" width="23.8" height="19.38" viewBox="0 0 35 28.5"><g fill="none" stroke-width="6.2" stroke-linecap="round" stroke-linejoin="miter"><path d="M3.1,14.8 L17.5,4.0 L31.9,14.8" stroke="#e8607a"/><path d="M9.2,25.4 L17.5,19.0 L25.8,25.4" stroke="#e8607a"/></g></svg>
<span class="a t" style="top:1261.78px;font-size:22px;line-height:22px;color:#f1f3f8;letter-spacing:0.270px;left:1632.80px;">SQL Injection</span>
<span class="a t" style="top:1293.66px;font-size:18px;line-height:18px;color:#8e9299;letter-spacing:-0.211px;left:1595.20px;">SQL injection (SQLi)</span>
<svg class="a" style="left:2033px;top:1145px;" width="100" height="100" viewBox="0 0 100 100"><circle cx="50.1" cy="50.1" r="47.9" fill="#212836"/><circle cx="50.1" cy="50.1" r="35" fill="#333b50"/><rect x="34" y="35.4" width="32.2" height="23.8" rx="4.6" fill="#ffffff"/><rect x="48" y="58" width="4.2" height="6" fill="#ffffff"/><rect x="42.6" y="61.8" width="15" height="2.9" rx="1.4" fill="#ffffff"/></svg>
<span class="a t" style="top:1261.88px;font-size:22px;line-height:22px;color:#f1f3f8;letter-spacing:0.750px;left:2059.45px;">Host</span>
<svg class="a" style="left:2373.4px;top:1148px;" width="200" height="100" viewBox="0 0 200 100"><polygon points="132.40,7.80 178.50,85.00 86.30,85.00" fill="#212836" stroke="#212836" stroke-width="14" stroke-linejoin="round"/><polygon points="132.40,17.80 165.50,74.00 99.30,74.00" fill="#d62f5c" stroke="#d62f5c" stroke-width="10" stroke-linejoin="round"/><polygon points="100.00,7.80 146.10,85.00 53.90,85.00" fill="#212836" stroke="#212836" stroke-width="14" stroke-linejoin="round"/><polygon points="100.00,17.80 133.10,74.00 66.90,74.00" fill="#d62f5c" stroke="#d62f5c" stroke-width="10" stroke-linejoin="round"/><polygon points="100.00,42.70 111.30,62.70 88.70,62.70" fill="#ffffff" stroke="#ffffff" stroke-width="6" stroke-linejoin="round"/><path d="M100,48.300000000000004 L100,56.1" stroke="#d62f5c" stroke-width="3" stroke-linecap="round"/><circle cx="100" cy="61.0" r="1.9" fill="#d62f5c"/></svg>
<span class="a t" style="top:1261.48px;font-size:22px;line-height:22px;color:#f1f3f8;letter-spacing:-0.097px;left:2431.10px;">Issues <span style="color:#8e9299">(749)</span></span>
<span class="a t" style="top:1293.56px;font-size:18px;line-height:18px;color:#8e9299;letter-spacing:-0.191px;left:2430.80px;">Click to expand</span>
<svg class="a" style="left:2456.8px;top:1337.2px;" width="23.8" height="19.38" viewBox="0 0 35 28.5"><g fill="none" stroke-width="6.2" stroke-linecap="round" stroke-linejoin="miter"><path d="M3.1,14.8 L17.5,4.0 L31.9,14.8" stroke="#e8607a"/><path d="M9.2,25.4 L17.5,19.0 L25.8,25.4" stroke="#e8607a"/></g></svg>
<span class="a t" style="top:1335.80px;font-size:21.5px;line-height:21.5px;color:#f1f3f8;letter-spacing:0.212px;left:2492.50px;">749</span>
<svg class="a" style="left:1557.5px;top:1428px;" width="200" height="100" viewBox="0 0 200 100"><polygon points="132.40,7.80 178.50,85.00 86.30,85.00" fill="#212836" stroke="#212836" stroke-width="14" stroke-linejoin="round"/><polygon points="132.40,17.80 165.50,74.00 99.30,74.00" fill="#d62f5c" stroke="#d62f5c" stroke-width="10" stroke-linejoin="round"/><polygon points="100.00,7.80 146.10,85.00 53.90,85.00" fill="#212836" stroke="#212836" stroke-width="14" stroke-linejoin="round"/><polygon points="100.00,17.80 133.10,74.00 66.90,74.00" fill="#d62f5c" stroke="#d62f5c" stroke-width="10" stroke-linejoin="round"/><polygon points="100.00,42.70 111.30,62.70 88.70,62.70" fill="#ffffff" stroke="#ffffff" stroke-width="6" stroke-linejoin="round"/><path d="M100,48.300000000000004 L100,56.1" stroke="#d62f5c" stroke-width="3" stroke-linecap="round"/><circle cx="100" cy="61.0" r="1.9" fill="#d62f5c"/></svg>
<span class="a t" style="top:1542.38px;font-size:22px;line-height:22px;color:#f1f3f8;letter-spacing:-0.083px;left:1621.00px;">Issues <span style="color:#8e9299">(78)</span></span>
<span class="a t" style="top:1573.76px;font-size:18px;line-height:18px;color:#8e9299;letter-spacing:-0.220px;left:1615.00px;">Click to expand</span>
<svg class="a" style="left:1518.7px;top:1617.4px;" width="23.8" height="19.38" viewBox="0 0 35 28.5"><g fill="none" stroke-width="6.2" stroke-linecap="round" stroke-linejoin="miter"><path d="M3.1,14.8 L17.5,4.0 L31.9,14.8" stroke="#e0303e"/><path d="M9.2,25.4 L17.5,19.0 L25.8,25.4" stroke="#e0303e"/></g></svg>
<span class="a t" style="top:1616.00px;font-size:21.5px;line-height:21.5px;color:#f1f3f8;left:1553.60px;">2</span>
<div class="a" style="left:1579px;top:1614px;width:2px;height:24px;background:linear-gradient(180deg,rgba(80,78,74,0),rgba(84,82,78,0.9) 50%,rgba(80,78,74,0));"></div>
<svg class="a" style="left:1597.5px;top:1617.4px;" width="23.8" height="19.38" viewBox="0 0 35 28.5"><g fill="none" stroke-width="6.2" stroke-linecap="round" stroke-linejoin="miter"><path d="M3.1,14.8 L17.5,4.0 L31.9,14.8" stroke="#e8607a"/><path d="M9.2,25.4 L17.5,19.0 L25.8,25.4" stroke="#e8607a"/></g></svg>
<span class="a t" style="top:1616.00px;font-size:21.5px;line-height:21.5px;color:#f1f3f8;left:1632.20px;">19</span>
<div class="a" style="left:1667px;top:1614px;width:2px;height:24px;background:linear-gradient(180deg,rgba(80,78,74,0),rgba(84,82,78,0.9) 50%,rgba(80,78,74,0));"></div>
<svg class="a" style="left:1685.8px;top:1617.4px;" width="23.8" height="19.38" viewBox="0 0 35 28.5"><g fill="none" stroke-width="6.2" stroke-linecap="round" stroke-linejoin="miter"><path d="M3.1,14.8 L17.5,4.0 L31.9,14.8" stroke="#3d4a69"/><path d="M9.2,25.4 L17.5,19.0 L25.8,25.4" stroke="#f5a524"/></g></svg>
<span class="a t" style="top:1616.00px;font-size:21.5px;line-height:21.5px;color:#f1f3f8;left:1719.60px;">10</span>
<div class="a" style="left:1756px;top:1614px;width:2px;height:24px;background:linear-gradient(180deg,rgba(80,78,74,0),rgba(84,82,78,0.9) 50%,rgba(80,78,74,0));"></div>
<svg class="a" style="left:1774.3px;top:1617.4px;" width="23.8" height="19.38" viewBox="0 0 35 28.5"><g fill="none" stroke-width="6.2" stroke-linecap="round" stroke-linejoin="miter"><path d="M3.1,14.8 L17.5,4.0 L31.9,14.8" stroke="#3d4a69"/><path d="M9.2,25.4 L17.5,19.0 L25.8,25.4" stroke="#3f8df0"/></g></svg>
<span class="a t" style="top:1616.00px;font-size:21.5px;line-height:21.5px;color:#f1f3f8;left:1809.00px;">47</span>
<svg class="a" style="left:2033px;top:1425px;" width="100" height="100" viewBox="0 0 100 100"><circle cx="50.1" cy="50.1" r="47.9" fill="#212836"/><circle cx="50.1" cy="50.1" r="35" fill="#683bd9"/><circle cx="50.1" cy="50.1" r="16" fill="#ffffff"/><circle cx="50.1" cy="46" r="4" fill="#683bd9"/><path d="M43.8,55.6 C43.8,52.6 46.4,51.1 50.1,51.1 C53.8,51.1 56.4,52.6 56.4,55.6 C56.4,57.4 55.6,58.1 54.2,58.1 L46,58.1 C44.6,58.1 43.8,57.4 43.8,55.6 Z" fill="#683bd9"/></svg>
<span class="a t" style="top:1542.38px;font-size:22px;line-height:22px;color:#f1f3f8;letter-spacing:0.100px;left:1980.50px;">arn:aws:sts::00304...</span>
<span class="a t" style="top:1573.76px;font-size:18px;line-height:18px;color:#8e9299;letter-spacing:-0.629px;left:2040.00px;">User Name</span>
<svg class="a" style="left:2373.4px;top:1428px;" width="200" height="100" viewBox="0 0 200 100"><polygon points="132.40,7.80 178.50,85.00 86.30,85.00" fill="#212836" stroke="#212836" stroke-width="14" stroke-linejoin="round"/><polygon points="132.40,17.80 165.50,74.00 99.30,74.00" fill="#d62f5c" stroke="#d62f5c" stroke-width="10" stroke-linejoin="round"/><polygon points="100.00,7.80 146.10,85.00 53.90,85.00" fill="#212836" stroke="#212836" stroke-width="14" stroke-linejoin="round"/><polygon points="100.00,17.80 133.10,74.00 66.90,74.00" fill="#d62f5c" stroke="#d62f5c" stroke-width="10" stroke-linejoin="round"/><polygon points="100.00,42.70 111.30,62.70 88.70,62.70" fill="#ffffff" stroke="#ffffff" stroke-width="6" stroke-linejoin="round"/><path d="M100,48.300000000000004 L100,56.1" stroke="#d62f5c" stroke-width="3" stroke-linecap="round"/><circle cx="100" cy="61.0" r="1.9" fill="#d62f5c"/></svg>
<span class="a t" style="top:1542.38px;font-size:22px;line-height:22px;color:#f1f3f8;letter-spacing:-0.177px;left:2444.00px;">Issues <span style="color:#8e9299">(9)</span></span>
<span class="a t" style="top:1573.76px;font-size:18px;line-height:18px;color:#8e9299;letter-spacing:-0.191px;left:2430.80px;">Click to expand</span>
<svg class="a" style="left:2432px;top:1617.4px;" width="23.8" height="19.38" viewBox="0 0 35 28.5"><g fill="none" stroke-width="6.2" stroke-linecap="round" stroke-linejoin="miter"><path d="M3.1,14.8 L17.5,4.0 L31.9,14.8" stroke="#e0303e"/><path d="M9.2,25.4 L17.5,19.0 L25.8,25.4" stroke="#e0303e"/></g></svg>
<span class="a t" style="top:1616.00px;font-size:21.5px;line-height:21.5px;color:#f1f3f8;left:2467.00px;">1</span>
<div class="a" style="left:2487.5px;top:1614px;width:2px;height:24px;background:linear-gradient(180deg,rgba(80,78,74,0),rgba(84,82,78,0.9) 50%,rgba(80,78,74,0));"></div>
<svg class="a" style="left:2506.5px;top:1617.4px;" width="23.8" height="19.38" viewBox="0 0 35 28.5"><g fill="none" stroke-width="6.2" stroke-linecap="round" stroke-linejoin="miter"><path d="M3.1,14.8 L17.5,4.0 L31.9,14.8" stroke="#3d4a69"/><path d="M9.2,25.4 L17.5,19.0 L25.8,25.4" stroke="#3f8df0"/></g></svg>
<span class="a t" style="top:1616.00px;font-size:21.5px;line-height:21.5px;color:#f1f3f8;left:2542.00px;">8</span>
<div class="a" style="left:2708px;top:1410px;width:64px;height:64px;background:#353f53;border-radius:13px;"></div>
<div class="a" style="left:2708px;top:1490px;width:64px;height:64px;background:#353f53;border-radius:13px;"></div>
<div class="a" style="left:2708px;top:1570px;width:64px;height:64px;background:#353f53;border-radius:13px;"></div>
<div class="a" style="left:2708px;top:1650px;width:64px;height:64px;background:#353f53;border-radius:13px;"></div>
<svg class="a" style="left:2724px;top:1426px;" width="32" height="32" viewBox="0 0 32 32"><circle cx="13.7" cy="14.8" r="9.6" fill="none" stroke="#f4f6fb" stroke-width="3"/><path d="M20.8,21.6 L27.4,27.6" stroke="#f4f6fb" stroke-width="3" stroke-linecap="round"/></svg>
<svg class="a" style="left:2730px;top:1512px;" width="20" height="20" viewBox="0 0 20 20"><path d="M2,10 L18,10 M10,2 L10,18" stroke="#f4f6fb" stroke-width="2.6" stroke-linecap="round"/></svg>
<svg class="a" style="left:2730px;top:1592px;" width="20" height="20" viewBox="0 0 20 20"><path d="M2,10 L18,10" stroke="#f4f6fb" stroke-width="2.6" stroke-linecap="round"/></svg>
<svg class="a" style="left:2728.5px;top:1670.5px;" width="23" height="23" viewBox="0 0 26 26"><circle cx="13" cy="13" r="7.4" fill="none" stroke="#f4f6fb" stroke-width="2.6"/><circle cx="13" cy="13" r="2.6" fill="#f4f6fb"/><path d="M13,1.5 L13,5.5 M13,20.5 L13,24.5 M1.5,13 L5.5,13 M20.5,13 L24.5,13" stroke="#f4f6fb" stroke-width="2.6" stroke-linecap="round"/></svg>
<div class="a" style="left:2852px;top:969px;width:8px;height:443px;background:#5a6682;border-radius:4px;"></div>
<div class="a" style="left:930px;top:1790px;width:1900px;height:50px;overflow:hidden">
<div class="a" style="left:13px;top:12px;width:1075px;height:120px;border:2px solid #2c384d;border-radius:22px;box-sizing:border-box"></div>
<div class="a" style="left:1136px;top:12px;width:719px;height:120px;border:2px solid #2c384d;border-radius:22px;box-sizing:border-box"></div>
</div>
<div class="a" style="left:2792px;top:1811px;width:20px;height:29px;background:#4a4c52;"></div>
<div class="a" style="left:2794.5px;top:1772px;width:69.5px;height:70px;background:#141416;border-radius:21px;border:4.5px solid #62c4a6;box-sizing:border-box;box-shadow:inset 0 0 0 2px #1b2233;"></div>
<span class="a t" style="top:1784.50px;font-size:49.5px;line-height:49.5px;color:#58b996;font-weight:700;-webkit-text-stroke:0.8px #58b996;left:2813.88px;transform:scaleX(0.76);">?</span>
</body></html>
